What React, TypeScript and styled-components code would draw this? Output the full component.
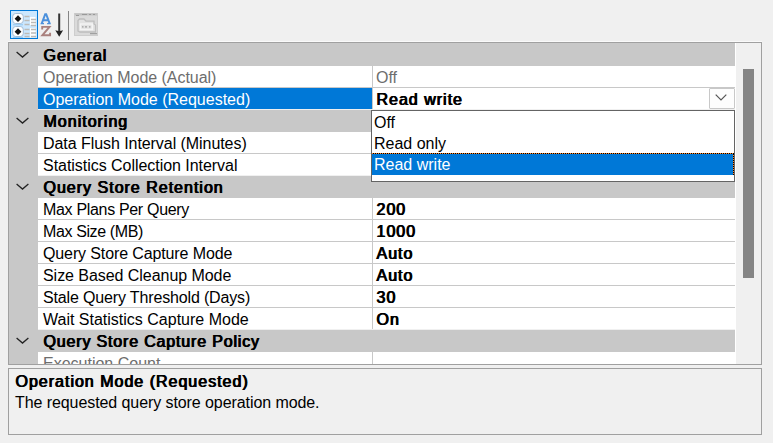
import React from "react";
import styled, { createGlobalStyle, css } from "styled-components";

const GlobalStyle = createGlobalStyle`
  * { box-sizing: border-box; }
  body { margin: 0; background: #f0f0f0; overflow: hidden; }
`;

/* Bold text is the regular face struck twice, one pixel apart. */
const doubleStrike = css<{ $tracking?: number }>`
  letter-spacing: ${(p) => 1 + (p.$tracking ?? 0)}px;
  text-shadow: 1px 0 0 currentColor, 0.5px 0 0 currentColor;
`;

const Page = styled.main`
  display: flex;
  flex-direction: column;
  width: 773px;
  height: 443px;
  padding: 8px 11px 8px 8px;
  background: #f0f0f0;
  color: #000;
  font: 16px/24px "Liberation Sans", Arial, sans-serif;
  white-space: nowrap;
`;

const Toolbar = styled.div`
  display: flex;
  height: 34px;
  padding: 2px 0 0 2px;
  border-bottom: 1px solid #fafafa;
`;

const ToolButton = styled.button<{ $active?: boolean }>`
  display: flex;
  width: 28px;
  height: 29px;
  padding: 0;
  border: 1px solid ${(p) => (p.$active ? "#0078d7" : "transparent")};
  background: ${(p) => (p.$active ? "#cce8ff" : "transparent")};
`;

const ToolDivider = styled.span`
  width: 1px;
  height: 29px;
  margin: 1px 4px 0 2px;
  background: #858585;
`;

const GridPanel = styled.section`
  display: flex;
  height: 323px;
  border: 1px solid #a0a0a0;
  overflow: hidden;
`;

const Rows = styled.div`
  flex: none;
  width: 727px;
  padding-top: 1px;
  background: #c8c8c8;
  border-right: 1px solid #fff;
`;

const CategoryRow = styled.div`
  display: flex;
  height: 22px;
`;

const Gutter = styled.span`
  display: flex;
  justify-content: center;
  flex: none;
  width: 29px;
  padding: 7px 2px 0 0;
`;

const CategoryName = styled.span`
  padding-left: 5px;
  ${doubleStrike}
`;

const PropertyRow = styled.div<{ $last?: boolean }>`
  display: grid;
  grid-template-columns: 334px 1fr;
  height: 22px;
  margin-left: 29px;
  background: #fff;
  border-bottom: 1px solid ${(p) => (p.$last ? "#f0f0f0" : "#c8c8c8")};
`;

const NameCell = styled.div<{ $selected?: boolean; $disabled?: boolean; $tracking?: number }>`
  height: 21px;
  padding-left: 5px;
  letter-spacing: ${(p) => p.$tracking ?? 0}px;
  background: ${(p) => (p.$selected ? "#0078d7" : "transparent")};
  color: ${(p) => (p.$selected ? "#fff" : p.$disabled ? "#6d6d6d" : "#000")};
`;

const ValueCell = styled.div<{ $disabled?: boolean }>`
  position: relative;
  display: flex;
  justify-content: space-between;
  height: 21px;
  padding-left: 3px;
  border-left: 1px solid #c8c8c8;
  color: ${(p) => (p.$disabled ? "#6d6d6d" : "#000")};
`;

const Value = styled.span<{ $bold?: boolean }>`
  ${(p) => p.$bold && doubleStrike}
`;

const DropButton = styled.button`
  display: flex;
  align-items: center;
  justify-content: center;
  width: 26px;
  height: 21px;
  padding: 0 2px 2px 0;
  border: 1px solid #c8c8c8;
  border-radius: 1px;
  background: #fdfdfd;
`;

const Menu = styled.div`
  position: absolute;
  z-index: 1;
  top: 22px;
  left: -2px;
  width: 364px;
  height: 72px;
  border: 1px solid #646464;
  background: #fff;
  color: #000;
`;

const Option = styled.div<{ $selected?: boolean }>`
  height: 21px;
  padding-left: 2px;
  ${(p) =>
    p.$selected &&
    css`
      height: 22px;
      color: #fff;
      background:
        repeating-linear-gradient(90deg, #ff8728 0 1px, #000 1px 2px) top / 100% 1px no-repeat,
        repeating-linear-gradient(180deg, #ff8728 0 1px, #000 1px 2px) right / 1px 100% no-repeat,
        #0078d7;
    `}
`;

const ScrollBar = styled.div`
  flex: 1;
  padding: 26px 0 0 7px;
  background: #f0f0f0;
`;

const Thumb = styled.div`
  width: 11px;
  height: 209px;
  background: #858585;
`;

const HelpPanel = styled.section`
  flex: none;
  height: 67px;
  margin-top: 3px;
  padding: 1px 6px;
  border: 1px solid #a0a0a0;
`;

const HelpTitle = styled.div`
  height: 21px;
  ${doubleStrike}
`;

const HelpText = styled.div`
  letter-spacing: -0.08px;
`;

const Chevron = () => (
  <svg width="13" height="8" viewBox="0 0 13 8" fill="none" stroke="#222" strokeWidth="1.3">
    <path d="M.6 1.1 6.5 6.1l5.9-5" />
  </svg>
);

const DropChevron = () => (
  <svg width="12" height="7" viewBox="0 0 12 7" fill="none" stroke="#555" strokeWidth="1.2">
    <path d="M.7.7 6 6 11.3.7" />
  </svg>
);

const CategorizedIcon = () => (
  <svg width="26" height="27" viewBox="0 0 26 27">
    {[2.5, 15.5].map((y) => (
      <g key={y}>
        <rect x="1.7" y={y} width="10.6" height="10" rx="3" fill="#fff" stroke="#a3bdd6" />
        <path d={`M7 ${y + 1.8}l3.4 3.4L7 ${y + 8.6}l-3.4-3.4z`} fill="#111" />
      </g>
    ))}
    <path d="M2 13.8h10M2 26.4h10" stroke="#8fc6f3" />
    <path d="M19 6h5.5v8H19zM19 17h5.5v9.5H19z" fill="#fff" />
    <path d="M13.5 5.5h5M13.5 9.5h5M13.5 13.5h5M13.5 18.5h5M13.5 22.5h5M13.5 25.5h5" stroke="#bdbab6" strokeWidth="1.4" />
    <path d="M20 8.5h5M20 11.5h5M20 14.5h5M20 18.5h5M20 22h5M20 25.5h5" stroke="#bdbab6" strokeWidth="1.4" />
  </svg>
);

const SortIcon = () => (
  <svg width="26" height="27" viewBox="0 0 26 27" fill="none">
    <path d="M2.8 12.3 6.2 3.2h1l3.4 9.1M4.2 9.2h5" stroke="#4b90dc" strokeWidth="2" />
    <path d="M1.6 12.6h3.4M8.1 12.6h3.6" stroke="#4b90dc" strokeWidth="1.4" />
    <path d="M3.2 18.4v-2.5h7.3L3.3 24.3h7.8v-2.6" stroke="#a9807d" strokeWidth="1.9" />
    <path d="M20.2 2.5v19" stroke="#333" strokeWidth="2" />
    <path d="M16.3 19.3q3.9 1.4 7.8 0l-3.9 6.5z" fill="#222" />
  </svg>
);

const PagesIcon = () => (
  <svg width="26" height="27" viewBox="0 0 26 27" fill="none">
    <rect x=".5" y="2.5" width="23" height="22" fill="#dadada" stroke="#cdcdcd" />
    <path d="M1 3.5h22" stroke="#c2c2c2" strokeWidth="2" />
    <path d="M2 4.5h3M8 3.5h5M15 3.5h2M19 3.5h2" stroke="#999" />
    <path d="M4 20V9.5L5.5 8H10l2 2.2h8V13l1.5 1v7H6z" fill="#e2e2e2" stroke="#bdbdbd" strokeWidth="1.3" />
    <path d="M6.5 18.5V13h11.8v5.5z" stroke="#f4f4f4" strokeWidth="1.4" />
    <path d="M8 15.8h1.5M11 15.8h2M15 15.8h1.5M16 22.7h7" stroke="#a0a0a0" strokeWidth="1.2" />
  </svg>
);

type Property = {
  name: string;
  value?: string;
  tracking?: number;
  disabled?: boolean;
  selected?: boolean;
};

const categories: { name: string; tracking?: number; items: Property[] }[] = [
  {
    name: "General",
    items: [
      { name: "Operation Mode (Actual)", value: "Off", tracking: -0.04, disabled: true },
      { name: "Operation Mode (Requested)", value: "Read write", selected: true },
    ],
  },
  {
    name: "Monitoring",
    items: [
      { name: "Data Flush Interval (Minutes)", tracking: -0.06 },
      { name: "Statistics Collection Interval", tracking: -0.04 },
    ],
  },
  {
    name: "Query Store Retention",
    items: [
      { name: "Max Plans Per Query", value: "200", tracking: -0.32 },
      { name: "Max Size (MB)", value: "1000", tracking: -0.38 },
      { name: "Query Store Capture Mode", value: "Auto", tracking: -0.12 },
      { name: "Size Based Cleanup Mode", value: "Auto", tracking: -0.05 },
      { name: "Stale Query Threshold (Days)", value: "30", tracking: -0.15 },
      { name: "Wait Statistics Capture Mode", value: "On" },
    ],
  },
  {
    name: "Query Store Capture Policy",
    tracking: -0.17,
    items: [{ name: "Execution Count", disabled: true }],
  },
];

const options = ["Off", "Read only", "Read write"];

export default function App() {
  return (
    <>
      <GlobalStyle />
      <Page>
        <Toolbar>
          <ToolButton $active aria-label="Categorized"><CategorizedIcon /></ToolButton>
          <ToolButton aria-label="Alphabetical"><SortIcon /></ToolButton>
          <ToolDivider />
          <ToolButton aria-label="Property pages" disabled><PagesIcon /></ToolButton>
        </Toolbar>
        <GridPanel>
          <Rows>
            {categories.map((category) => (
              <React.Fragment key={category.name}>
                <CategoryRow>
                  <Gutter><Chevron /></Gutter>
                  <CategoryName $tracking={category.tracking}>{category.name}</CategoryName>
                </CategoryRow>
                {category.items.map((item, i) => (
                  <PropertyRow key={item.name} $last={i === category.items.length - 1}>
                    <NameCell $selected={item.selected} $disabled={item.disabled} $tracking={item.tracking}>
                      {item.name}
                    </NameCell>
                    <ValueCell $disabled={item.disabled}>
                      <Value $bold={!item.disabled}>{item.value}</Value>
                      {item.selected && (
                        <>
                          <DropButton aria-label="Open"><DropChevron /></DropButton>
                          <Menu>
                            {options.map((o) => (
                              <Option key={o} $selected={o === item.value}>{o}</Option>
                            ))}
                          </Menu>
                        </>
                      )}
                    </ValueCell>
                  </PropertyRow>
                ))}
              </React.Fragment>
            ))}
          </Rows>
          <ScrollBar><Thumb /></ScrollBar>
        </GridPanel>
        <HelpPanel>
          <HelpTitle>Operation Mode (Requested)</HelpTitle>
          <HelpText>The requested query store operation mode.</HelpText>
        </HelpPanel>
      </Page>
    </>
  );
}
